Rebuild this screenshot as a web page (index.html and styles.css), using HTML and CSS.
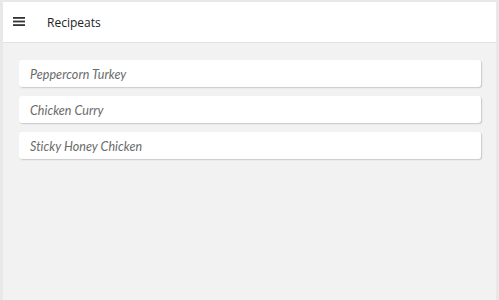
FILE: index.html
```html
<!DOCTYPE html>
<html>
<head>
<meta charset="utf-8">
<link rel="stylesheet" href="styles.css">
</head>
<body>
<div class="app">
  <header class="topbar">
    <svg class="menu" width="12" height="10" viewBox="0 0 12 10">
      <rect x="0" y="0" width="12" height="1.8" fill="#333"/>
      <rect x="0" y="3.6" width="12" height="1.8" fill="#333"/>
      <rect x="0" y="7.2" width="12" height="1.8" fill="#333"/>
    </svg>
    <span class="title">Recipeats</span>
  </header>
  <main class="list">
    <div class="card">Peppercorn Turkey</div>
    <div class="card">Chicken Curry</div>
    <div class="card">Sticky Honey Chicken</div>
  </main>
</div>
</body>
</html>
```
FILE: styles.css
```css
html, body {
  margin: 0;
  height: 100%;
}
body {
  background: #e8e8e8;
  font-family: "Open Sans", "Noto Sans", sans-serif;
}
.app {
  margin: 2px 3px 0 3px;
  height: calc(100% - 2px);
  background: #f2f2f2;
  display: flex;
  flex-direction: column;
}
.topbar {
  height: 40px;
  background: #fff;
  border-bottom: 1px solid #e2e2e2;
  display: flex;
  align-items: center;
  padding-left: 10px;
  flex-shrink: 0;
}
.menu {
  display: block;
  margin-top: -1px;
}
.title {
  margin-left: 22px;
  font-size: 12px;
  color: #222;
  font-weight: 500;
}
.list {
  padding: 17px 15px 0 16px;
  display: flex;
  flex-direction: column;
  gap: 9px;
}
.card {
  height: 27px;
  background: #fff;
  border-radius: 3px;
  box-shadow: 1px 1px 1.5px rgba(0,0,0,0.18);
  display: flex;
  align-items: center;
  padding-left: 11px;
  padding-top: 1px;
  box-sizing: border-box;
  font-family: "Lato", "Open Sans", sans-serif;
  font-style: italic;
  font-size: 12.5px;
  letter-spacing: 0.05px;
  color: #6a6a6a;
}
```
